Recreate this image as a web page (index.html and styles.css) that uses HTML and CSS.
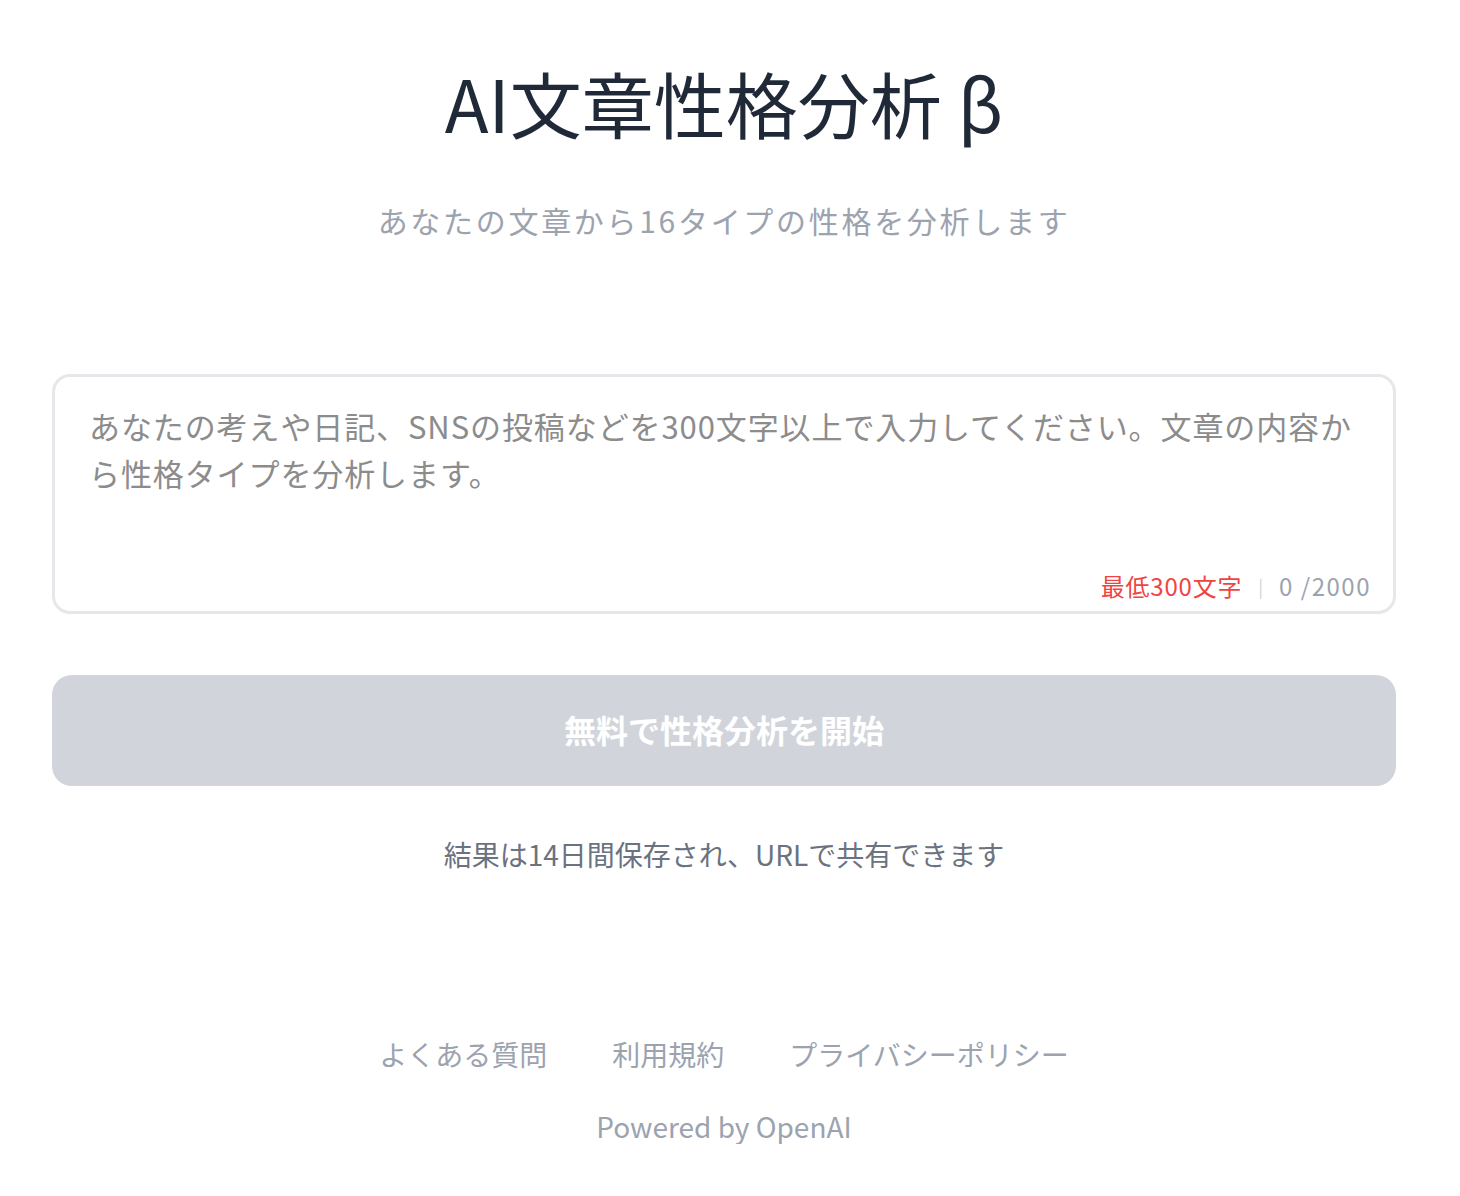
FILE: index.html
```html
<!DOCTYPE html>
<html lang="ja">
<head>
<meta charset="utf-8">
<title>AI文章性格分析 β</title>
<link rel="stylesheet" href="styles.css">
</head>
<body>
<main class="page">
  <h1 class="title">AI文章性格分析 β</h1>
  <p class="subtitle">あなたの文章から16タイプの性格を分析します</p>
  <div class="input-box">
    <textarea class="input" placeholder="あなたの考えや日記、SNSの投稿などを300文字以上で入力してください。文章の内容から性格タイプを分析します。"></textarea>
    <div class="counter">
      <span class="min">最低300文字</span>
      <span class="sep">|</span>
      <span class="count">0 /2000</span>
    </div>
  </div>
  <button class="submit" type="button">無料で性格分析を開始</button>
  <p class="note">結果は14日間保存され、URLで共有できます</p>
  <nav class="links">
    <a href="#">よくある質問</a>
    <a href="#">利用規約</a>
    <a href="#">プライバシーポリシー</a>
  </nav>
  <p class="powered">Powered by OpenAI</p>
</main>
</body>
</html>
```
FILE: styles.css
```css
* { box-sizing: border-box; }
body {
  margin: 0;
  background: #ffffff;
  font-family: "Noto Sans CJK JP", "Noto Sans", sans-serif;
}
.page {
  width: 1344px;
  margin-left: 52px;
  display: flex;
  flex-direction: column;
  align-items: center;
}
.title {
  margin: 66px 0 0;
  font-size: 72px;
  line-height: 72px;
  font-weight: 400;
  color: #1f2937;
}
.subtitle {
  margin: 62px 0 0;
  font-size: 30px;
  line-height: 40px;
  letter-spacing: 2.7px;
  color: #9ca3af;
}
.input-box {
  margin-top: 134px;
  width: 100%;
  height: 240px;
  border: 3px solid #e5e7eb;
  border-radius: 18px;
  display: flex;
  flex-direction: column;
}
.input {
  height: 194px;
  border: none;
  outline: none;
  resize: none;
  padding: 25px 22px 0 34px;
  font-family: "Noto Sans CJK JP", sans-serif;
  font-size: 31px;
  line-height: 47px;
  letter-spacing: 0.9px;
  color: #374151;
  background: transparent;
}
.input::placeholder { color: #8c8c8c; }
.counter {
  display: flex;
  justify-content: flex-end;
  align-items: center;
  gap: 16px;
  padding: 0 22px 8px;
  font-size: 24px;
  line-height: 30px;
}
.min { color: #ef4444; letter-spacing: 0.8px; }
.sep { color: #d1d5db; font-size: 18px; }
.count { color: #9ca3af; letter-spacing: 1.5px; }
.submit {
  margin-top: 61px;
  width: 100%;
  height: 111px;
  border: none;
  border-radius: 20px;
  background: #d1d5db;
  color: #ffffff;
  font-family: "Noto Sans CJK JP", sans-serif;
  font-size: 32px;
  font-weight: 700;
  padding: 0 0 4px;
}
.note {
  margin: 48px 0 0;
  font-size: 28px;
  line-height: 40px;
  color: #6b7280;
}
.links {
  margin-top: 160px;
  display: flex;
  gap: 65px;
  font-size: 28px;
  line-height: 40px;
}
.links a { color: #9ca3af; text-decoration: none; }
.powered {
  margin: 34px 0 0;
  font-size: 28px;
  line-height: 36px;
  color: #9ca3af;
}
```
